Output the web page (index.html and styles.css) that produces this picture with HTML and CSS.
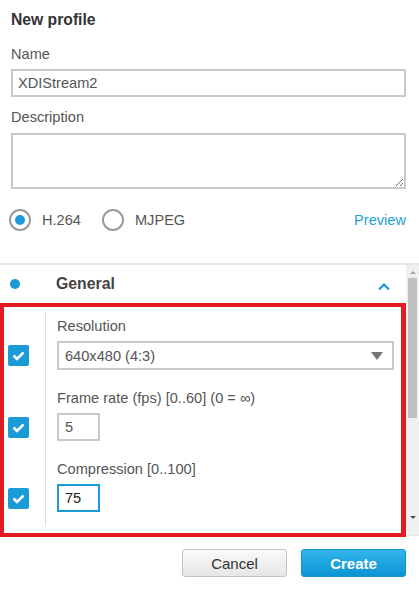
FILE: index.html
```html
<!DOCTYPE html>
<html lang="en">
<head>
    <meta charset="UTF-8">
    <title>New profile</title>
    <link rel="stylesheet" href="styles.css">
</head>
<body>
    <div class="top">
        <h1>New profile</h1>
        <label class="lbl lbl-name">Name</label>
        <input class="text-input" type="text" value="XDIStream2">
        <label class="lbl lbl-desc">Description</label>
        <textarea class="text-area"></textarea>
        <div class="codec-row">
            <span class="radio checked"></span>
            <span class="radio-label">H.264</span>
            <span class="radio"></span>
            <span class="radio-label">MJPEG</span>
            <a class="preview" href="#">Preview</a>
        </div>
    </div>

    <div class="panel">
        <div class="panel-main">
            <div class="section-head">
                <span class="dot"></span>
                <span class="section-title">General</span>
                <svg class="chevron" width="14" height="9" viewBox="0 0 14 9">
                    <path d="M2 7.5 L7 2.5 L12 7.5" fill="none" stroke="#1a9ad6" stroke-width="2.2"/>
                </svg>
            </div>
            <div class="section-body">
                <div class="row first">
                    <div class="check-col"><span class="check"><svg width="21" height="21" viewBox="0 0 21 21"><path d="M5.5 10.5 L9 14 L15.5 7.5" fill="none" stroke="#fff" stroke-width="2.6"/></svg></span></div>
                    <div class="field">
                        <div class="field-label">Resolution</div>
                        <div class="select">640x480 (4:3)<span class="caret"></span></div>
                    </div>
                </div>
                <div class="row">
                    <div class="check-col"><span class="check"><svg width="21" height="21" viewBox="0 0 21 21"><path d="M5.5 10.5 L9 14 L15.5 7.5" fill="none" stroke="#fff" stroke-width="2.6"/></svg></span></div>
                    <div class="field">
                        <div class="field-label">Frame rate (fps) [0..60] (0 = ∞)</div>
                        <div class="small-input">5</div>
                    </div>
                </div>
                <div class="row last">
                    <div class="check-col"><span class="check"><svg width="21" height="21" viewBox="0 0 21 21"><path d="M5.5 10.5 L9 14 L15.5 7.5" fill="none" stroke="#fff" stroke-width="2.6"/></svg></span></div>
                    <div class="field">
                        <div class="field-label">Compression [0..100]</div>
                        <div class="small-input focused">75</div>
                    </div>
                </div>
            </div>
        </div>
        <div class="scrollbar">
            <span class="arrow-up"></span>
            <span class="thumb"></span>
            <span class="spacer"></span>
            <span class="arrow-down"></span>
        </div>
    </div>

    <div class="footer">
        <button class="btn btn-cancel">Cancel</button>
        <button class="btn btn-create">Create</button>
    </div>
</body>
</html>
```

FILE: styles.css
```css
body {
    margin: 0;
    width: 419px;
    background-color: #fff;
    color: #555;
    font-family: "Liberation Sans", Arial, sans-serif;
    font-size: 14.6px;
}
.top {
    display: flex;
    flex-direction: column;
    padding: 10px 13px 0 11px;
}
h1 {
    margin: 0;
    font-size: 15.7px;
    line-height: 20px;
    color: #333;
}
.lbl {
    line-height: 18px;
    color: #555;
}
.lbl-name {
    margin-top: 15px;
}
.lbl-desc {
    margin-top: 11px;
}
.text-input {
    box-sizing: border-box;
    margin: 6px 0 0 0;
    height: 28px;
    width: 100%;
    padding: 0 5px;
    border: 2px solid #c9c9c9;
    font-family: inherit;
    font-size: 14.6px;
    color: #555;
    outline: none;
}
.text-area {
    box-sizing: border-box;
    margin: 7px 0 0 0;
    height: 56px;
    width: 100%;
    border: 2px solid #c9c9c9;
    resize: vertical;
    outline: none;
}
.codec-row {
    display: flex;
    align-items: center;
    height: 24px;
    margin-top: 19px;
}
.radio {
    box-sizing: border-box;
    width: 22px;
    height: 22px;
    margin-left: -2px;
    border: 2px solid #9a9a9a;
    border-radius: 50%;
    display: flex;
    align-items: center;
    justify-content: center;
}
.radio.checked::after {
    content: "";
    width: 10px;
    height: 10px;
    border-radius: 50%;
    background-color: #1a9ad6;
}
.radio-label {
    margin-left: 11px;
    margin-right: 23px;
    color: #555;
}
.preview {
    margin-left: auto;
    color: #1f9ed9;
    text-decoration: none;
}

.panel {
    display: flex;
    margin-top: 31px;
    border-top: 2px solid #e8e8e8;
    border-bottom: 1px solid #e8e8e8;
    height: 270px;
}
.panel-main {
    width: 406px;
}
.section-head {
    display: flex;
    align-items: center;
    height: 38px;
}
.dot {
    width: 10px;
    height: 10px;
    margin-left: 10px;
    border-radius: 50%;
    background-color: #1a9ad6;
}
.section-title {
    margin-left: 36px;
    font-size: 15.8px;
    font-weight: bold;
    color: #444;
}
.chevron {
    margin-left: auto;
    margin-right: 15px;
    margin-top: 4px;
}
.section-body {
    box-sizing: border-box;
    width: 406px;
    height: 234px;
    border: 4px solid #e31b23;
    border-right-width: 5px;
    padding: 5px 0 8px 0;
}
.row {
    display: flex;
}
.check-col {
    width: 37px;
    padding-left: 4px;
    padding-top: 33px;
    border-right: 1px solid #dedede;
}
.row + .row .check-col {
    padding-top: 47px;
}
.row.last .check-col,
.row.last .field {
    padding-bottom: 14px;
}
.check {
    display: block;
    width: 21px;
    height: 21px;
    border-radius: 2px;
    background-color: #1a9ad6;
}
.check svg {
    display: block;
}
.field {
    flex: 1;
    padding: 5px 0 0 11px;
}
.row + .row .field {
    padding-top: 19px;
}
.field-label {
    line-height: 18px;
    margin-bottom: 6px;
    color: #555;
}
.select {
    box-sizing: border-box;
    display: flex;
    align-items: center;
    width: 337px;
    height: 29px;
    padding-left: 6px;
    border: 2px solid #c9c9c9;
    color: #555;
}
.caret {
    margin-left: auto;
    margin-right: 9px;
    width: 0;
    height: 0;
    border-left: 6px solid transparent;
    border-right: 6px solid transparent;
    border-top: 8px solid #777;
}
.small-input {
    box-sizing: border-box;
    display: flex;
    align-items: center;
    width: 43px;
    height: 28px;
    padding-left: 6px;
    border: 2px solid #c9c9c9;
    color: #555;
}
.small-input.focused {
    border-color: #1a9ad6;
    color: #222;
}

.scrollbar {
    display: flex;
    flex-direction: column;
    align-items: center;
    width: 13px;
    background-color: #f0f0f0;
}
.arrow-up {
    margin-top: 6px;
    width: 0;
    height: 0;
    border-left: 3px solid transparent;
    border-right: 3px solid transparent;
    border-bottom: 3px solid #a3a3a3;
}
.thumb {
    margin-top: 4px;
    width: 9px;
    height: 140px;
    background-color: #c1c1c1;
}
.spacer {
    flex: 1;
}
.arrow-down {
    margin-bottom: 16px;
    width: 0;
    height: 0;
    border-left: 3px solid transparent;
    border-right: 3px solid transparent;
    border-top: 3px solid #505050;
}

.footer {
    display: flex;
    justify-content: flex-end;
    gap: 14px;
    padding: 13px 13px 0 0;
}
.btn {
    width: 105px;
    height: 28px;
    border-radius: 3px;
    font-family: inherit;
    font-size: 15px;
}
.btn-cancel {
    border: 1px solid #c4c4c4;
    background: linear-gradient(#fafafa, #e6e6e6);
    color: #333;
}
.btn-create {
    border: 1px solid #1493cf;
    background: linear-gradient(#33b5ea, #0b95d4);
    color: #fff;
    font-weight: bold;
}
```
